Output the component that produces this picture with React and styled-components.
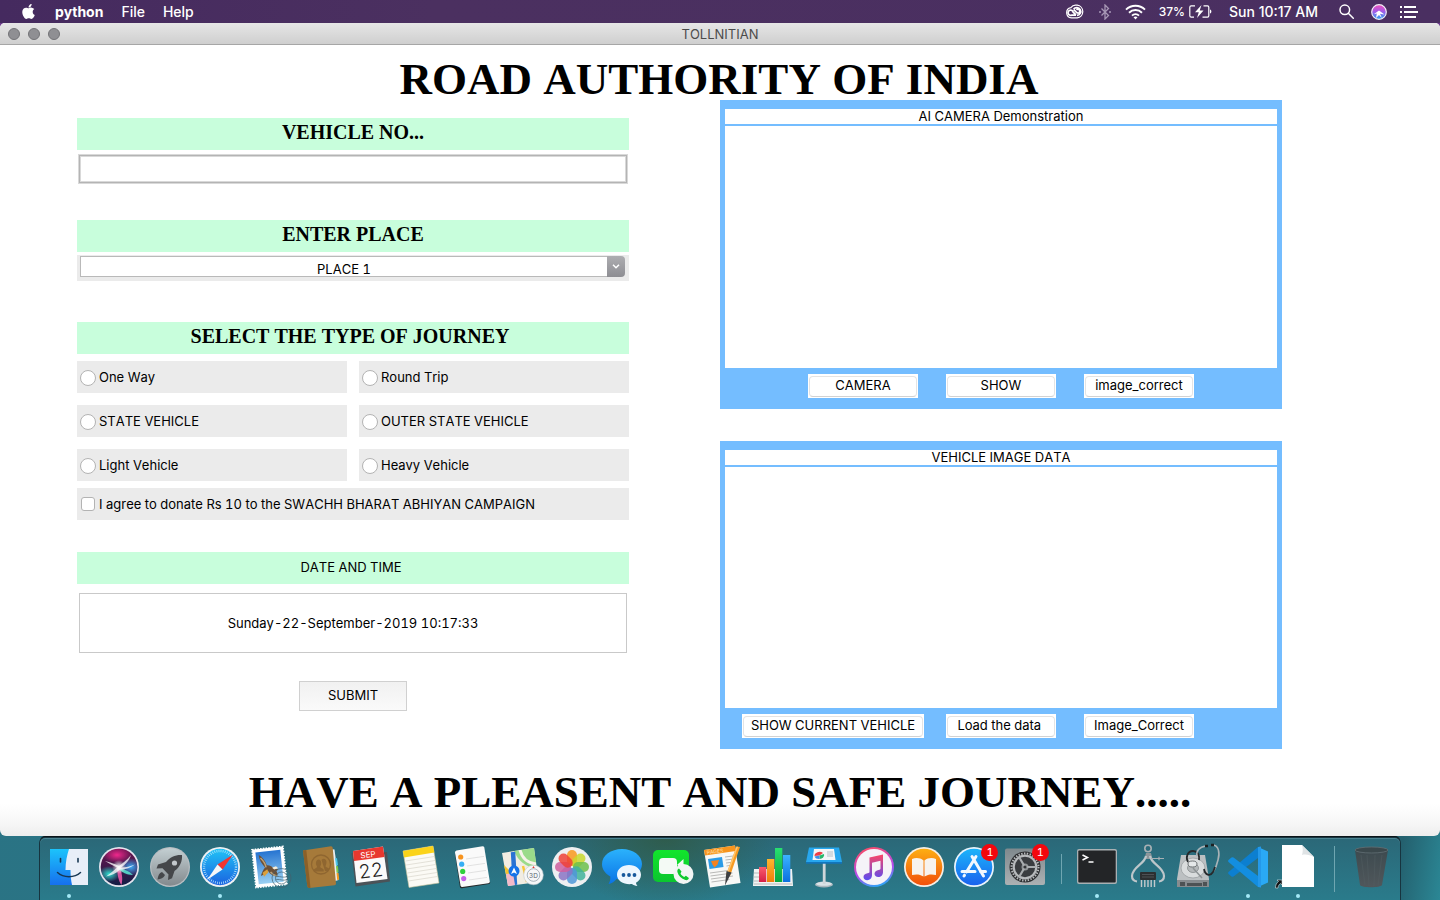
import React from "react";
import styled, { createGlobalStyle, css } from "styled-components";
import { FaApple } from "react-icons/fa";

const GlobalStyle = createGlobalStyle`
  *, *::before, *::after { box-sizing: border-box; }
  html, body { margin: 0; }
  body {
    background: #2a7786;
    color: #000;
    font-family: Inter, "Liberation Sans", sans-serif;
    font-size: 13px;
    font-kerning: none;
    font-variant-numeric: tabular-nums;
  }
  button, input, select { font: inherit; color: inherit; }
  h1, h2, p, ul { margin: 0; padding: 0; }
`;

const Desktop = styled.div`
  min-height: 100vh;
  display: flex;
  flex-direction: column;
  background: linear-gradient(100deg, #1b5268 0%, #2a7384 5%, #2a7786 60%, #24606e 97%, #2b8795 100%);
`;

/* ---------- menu bar ---------- */

const MenuBar = styled.header`
  height: 23px;
  display: flex;
  align-items: center;
  justify-content: space-between;
  padding: 0 22px 0 20px;
  background: linear-gradient(90deg, #452a5f, #4b3060 30%, #4a2f61);
  color: #fff;
  font-size: 14px;
  font-weight: 500;
  font-variant-numeric: normal;
`;

const MenuGroup = styled.nav`
  display: flex;
  align-items: center;
  gap: ${(p) => p.$gap}px;
`;

const MenuItem = styled.button`
  display: flex;
  align-items: center;
  margin-right: ${(p) => p.$after || 0}px;
  padding: 0;
  border: 0;
  background: none;
  line-height: 22px;
  font-weight: ${(p) => (p.$strong ? 700 : 500)};
`;

const Battery = styled.span`
  display: flex;
  align-items: center;
  gap: 4px;
  margin-right: 4px;
  font-size: 12px;
  line-height: 22px;
`;

const Clock = styled.time`
  margin-right: 8px;
  line-height: 22px;
`;

/* ---------- window ---------- */

const Window = styled.div`
  flex: 1;
  display: flex;
  flex-direction: column;
  border-radius: 5px 5px 6px 6px;
  overflow: hidden;
  background: linear-gradient(0deg, #ededed 0, #f6f6f6 12px, #fff 32px);
`;

const WindowBacking = styled.div`
  flex: 1;
  display: flex;
  flex-direction: column;
  background: linear-gradient(180deg, #6b3a8c 0, #6b3a8c 30px, transparent 30px);
`;

const TitleBar = styled.div`
  height: 22px;
  display: grid;
  grid-template-columns: 1fr auto 1fr;
  align-items: center;
  padding: 0 8px;
  background: linear-gradient(180deg, #e6e6e6, #cfcfcf);
  border-bottom: 1px solid #a6a6a6;
  color: #4b4b4b;
`;

const Lights = styled.div`
  display: flex;
  gap: 8px;
`;

const Light = styled.button`
  width: 12px;
  height: 12px;
  padding: 0;
  border: 1px solid #737377;
  border-radius: 50%;
  background: #8f8f93;
`;

const PageTitle = styled.h1`
  padding: 14px 2px 0 0;
  font: bold 45px/41px "Liberation Serif", serif;
  font-kerning: none;
  text-align: center;
`;

const Farewell = styled.p`
  padding: 18px 0 19px;
  font: bold 45px/50px "Liberation Serif", serif;
  font-kerning: none;
  text-align: center;
`;

const Columns = styled.main`
  flex: 1;
  display: grid;
  grid-template-columns: 552fr 562fr;
  column-gap: 91px;
  padding: 0 158px 0 77px;
`;

/* ---------- form ---------- */

const Form = styled.form`
  padding-top: 18px;
  display: flex;
  flex-direction: column;
`;

const Section = styled.section`
  display: flex;
  flex-direction: column;
  gap: ${(p) => p.$gap}px;
  margin-bottom: ${(p) => p.$after}px;
`;

const band = css`
  display: block;
  height: 32px;
  background: #c8fedc;
  text-align: center;
`;

const Band = styled.label`
  ${band}
  font: bold 20px/29px "Liberation Serif", serif;
  font-kerning: none;
`;

const BandHeading = styled.h2`
  ${band}
  padding-right: 6px;
  font: bold 20px/29px "Liberation Serif", serif;
  font-kerning: none;
`;

const DateBand = styled.label`
  ${band}
  padding-right: 4px;
  line-height: 31px;
`;

const TextField = styled.input`
  height: 28px;
  margin: 0 2px;
  padding: 0 6px;
  border: 1px solid #b4b4b4;
  background: #fff;
  box-shadow: 0 0 0 1px #d9d9d9, inset 0 0 0 1px #d9d9d9;
  outline: none;
`;

const Combo = styled.div`
  display: flex;
  align-items: flex-start;
  height: 26px;
  padding: 1px 4px 0 3px;
  background: #ebebeb;
`;

const ComboSelect = styled.select`
  appearance: none;
  flex: 1;
  min-width: 0;
  height: 21px;
  padding: 5px 0 0;
  border: 1px solid #b9b9b9;
  border-right: 0;
  border-radius: 0;
  background: #fff;
  line-height: 15px;
  text-align: center;
  text-align-last: center;
  outline: none;
`;

const ComboArrow = styled.span`
  display: flex;
  align-items: center;
  justify-content: center;
  width: 18px;
  height: 21px;
  border-radius: 0 4px 4px 0;
  background: linear-gradient(180deg, #adadb1, #8e8e93);
`;

const ChoiceGrid = styled.div`
  display: grid;
  grid-template-columns: 1fr 1fr;
  gap: 12px;
`;

const Choice = styled.label`
  display: flex;
  align-items: center;
  gap: 3px;
  height: 32px;
  padding: 0 3px;
  background: #ebebeb;
`;

const Radio = styled.input.attrs({ type: "radio" })`
  appearance: none;
  width: 16px;
  height: 16px;
  margin: 2px 0 0;
  border: 1px solid #b3b3b3;
  border-radius: 50%;
  background: #fff;
  &:checked { box-shadow: inset 0 0 0 4px #fff; background: #444; }
`;

const Checkbox = styled.input.attrs({ type: "checkbox" })`
  appearance: none;
  width: 14px;
  height: 14px;
  margin: 0 1px;
  border: 1px solid #b3b3b3;
  border-radius: 3px;
  background: #fff;
  &:checked { box-shadow: inset 0 0 0 3px #fff; background: #444; }
`;

const DateBox = styled.output`
  display: flex;
  align-items: center;
  justify-content: center;
  height: 60px;
  margin: 0 2px;
  border: 1px solid #c9c9c9;
  background: #fff;
`;

const Submit = styled.button`
  align-self: center;
  width: 108px;
  height: 30px;
  padding: 0 0 2px;
  border: 1px solid #d0d0d0;
  background: linear-gradient(180deg, #f1f1f1, #fafafa);
`;

/* ---------- camera panels ---------- */

const Panels = styled.div`
  display: flex;
  flex-direction: column;
  gap: 32px;
`;

const Panel = styled.section`
  display: flex;
  flex-direction: column;
  padding: 9px 5px 11px;
  background: #74bdff;
`;

const PanelTitle = styled.h2`
  margin-bottom: 2px;
  background: #fff;
  font-size: 13px;
  font-weight: 400;
  line-height: 15px;
  text-align: center;
`;

const Screen = styled.div`
  height: ${(p) => p.$height}px;
  margin-bottom: 6px;
  background: #fff;
`;

const Actions = styled.div`
  display: flex;
  justify-content: center;
  padding-right: ${(p) => p.$inset || 0}px;
`;

const Action = styled.button`
  width: ${(p) => (p.$wide ? 182 : 110)}px;
  height: 24px;
  margin-right: ${(p) => p.$after || 0}px;
  padding: 1px;
  border: 0;
  background: #fff;
  white-space: pre;
`;

const ActionFace = styled.span`
  display: block;
  height: 21px;
  border: 1px solid #e4e4e4;
  border-bottom-color: #d2d2d2;
  border-radius: 4px;
  line-height: 17px;
`;

/* ---------- dock ---------- */

const DockArea = styled.footer`
  padding: 0 40px;
`;

const Dock = styled.ul`
  display: flex;
  height: 62px;
  margin-top: 2px;
  padding: 0 4px;
  list-style: none;
  border-radius: 5px 5px 0 0;
  background:
    radial-gradient(ellipse 110px 70px at 46% 0, rgba(48, 88, 62, 0.75), transparent),
    linear-gradient(180deg, #2b6878, #2a7b8b);
  box-shadow: 0 0 0 1px #17343f, 0 -2px 0 #0a1418, inset 0 1px 0 #4a8391;
`;

const DockItem = styled.li`
  flex: 50 1 0;
  display: flex;
  flex-direction: column;
  align-items: center;
  padding-top: 5px;
`;

const DockButton = styled.button`
  position: relative;
  width: 48px;
  height: 48px;
  padding: 0;
  border: 0;
  background: none;
  svg { display: block; overflow: visible; }
`;

const RunningDot = styled.span`
  width: 4px;
  height: 4px;
  margin-top: 3px;
  border-radius: 50%;
  background: #a5e9f7;
`;

const Badge = styled.span`
  position: absolute;
  top: 1px;
  right: 0;
  width: 17px;
  height: 17px;
  border-radius: 50%;
  background: #f3070d;
  color: #fff;
  font-size: 11px;
  line-height: 17px;
  text-align: center;
`;

const DockSeparator = styled.li`
  flex: 22 1 0;
  display: flex;
  justify-content: center;
  align-items: flex-start;
  padding-top: ${(p) => (p.$tall ? 8 : 16)}px;
  &::before {
    content: "";
    width: 1px;
    height: ${(p) => (p.$tall ? 46 : 30)}px;
    background: #6fa6b1;
  }
`;

/* ---------- dock drawings ---------- */

const Finder = () => (
  <>
    <rect x="5" y="6" width="38" height="36" fill="url(#finderBlue)" />
    <path d="M24 6h19v36H27c-1-5-1.500-9-1.500-15H20.500C20.500 19 22 12 24 6z" fill="#e8eef8" />
    <path d="M12.500 29.500c6 5.500 17 5.500 23 0" fill="none" stroke="#173753" strokeWidth="1.500" strokeLinecap="round" />
    <path d="M15.500 15.500v3.500M33 15.500v3.500" stroke="#173753" strokeWidth="1.600" strokeLinecap="round" />
  </>
);

const Siri = () => (
  <>
    <circle cx="24" cy="24" r="20" fill="#e4e4ee" />
    <circle cx="24" cy="24" r="18.300" fill="url(#siriBg)" />
    <g clipPath="url(#siriClip)">
      <ellipse cx="22" cy="12" rx="14" ry="8" fill="url(#siriPink)" />
      <ellipse cx="14" cy="31" rx="11" ry="8" fill="url(#siriTeal)" />
      <ellipse cx="36" cy="24" rx="11" ry="9" fill="url(#siriSky)" />
      <path d="M24 24c3 5 4 11 2.500 18-3-4-4-10-4.500-17z" fill="#e85aa5" opacity=".9" />
      <path d="M24 25c5 1 10 3 14 7-6 0-11-3-15-6z" fill="#59e6cf" opacity=".85" />
      <path d="M10 18c5 1 10 3 14 5 4-3 8-6 12-11-2 6-6 10-10 12.500 5 0 9-1 14-3-4 3-9 5-15 5-4 4-9 6-14 7 4-3 8-6 11-9-4-2-8-4-12-6.500z" fill="#fff" opacity=".75" />
    </g>
    <circle cx="24" cy="24" r="7" fill="url(#glow)" />
  </>
);

const Rocket = () => (
  <>
    <circle cx="24" cy="24" r="20" fill="#b9bec2" />
    <circle cx="24" cy="24" r="18.800" fill="url(#steel)" />
    <path d="M36 12c-6-.5-12 2-16 7l-8 2.500-1.500 4 6-.3 6 6.300-.5 5.500 4-1.800 2.500-7.200C34 24 36.500 18 36 12z" fill="#45474a" />
    <circle cx="28.500" cy="20" r="2.600" fill="#c3c8cb" />
    <path d="M16 29c-3 1-4 4-4.500 7.500 3.500-.5 6-1.500 7.500-4.500z" fill="#45474a" />
  </>
);

const Safari = () => (
  <>
    <circle cx="24" cy="24" r="20" fill="#eef1f4" />
    <circle cx="24" cy="24" r="18.200" fill="url(#safariBlue)" />
    <circle cx="24" cy="24" r="16" fill="none" stroke="#bfe8fb" strokeWidth="2.400" strokeDasharray=".7 1.400" />
    <path d="M37 11.500 21.500 21.500l5 5z" fill="#f3342f" />
    <path d="M11 37l10.500-15.500 5 5z" fill="#f4f6f8" />
  </>
);

const Mail = () => (
  <>
    <g transform="rotate(-6 24 24)">
      <rect x="8" y="5" width="31" height="38" fill="#fff" stroke="#fff" strokeWidth="1.800" strokeDasharray="1.500 1.200" />
      <rect x="11" y="8" width="25" height="32" fill="url(#sky)" />
      <path d="M14 11c3 2 6 6 7 11 3 0 5 2 7 4l4 1-2 2c1 2 1 4 0 5-4-1-7-3-8-6-3 2-5 3-8 4 1-3 3-6 5-8-3-4-5-8-5-13z" fill="#6b5038" />
      <path d="M15.500 14c2.500 3 4.500 7 4.500 10M24 29c2 3 4 4 6 5" fill="none" stroke="#bba076" strokeWidth="1.500" />
      <path d="M26 25l4-1 2 2-4 1z" fill="#f5ecd8" />
      <path d="M16 29l5-3 1 3-5 4z" fill="#dba03b" />
    </g>
    <g fill="none" stroke="#44616e" strokeWidth="1" opacity=".7">
      <circle cx="35.500" cy="35" r="9.500" />
      <circle cx="35.500" cy="35" r="6" />
      <path d="M29 34c4-2 8 2 13-1M29 37c4-2 8 2 13-1" />
    </g>
  </>
);

const Contacts = () => (
  <>
    <path d="M33 6l4.500.5L41.500 37l-6 2z" fill="#eceff0" />
    <path d="M38 15l2 .2 1 7-2 .5z" fill="#4ec4e8" />
    <path d="M39 23l2 .2.500 6-2 .5z" fill="#7ec94b" />
    <path d="M39.500 30l2 0 .7 6.500-2 .5z" fill="#f49b20" />
    <path d="M6 7.500 34 3.200q1.500 0 1.700 1.500L39 40.500q0 1.500-1.500 1.700L12.500 45q-2-.2-2.200-2z" fill="#a67a3a" />
    <path d="M6 7.500l3.300-.5 4.200 37.800-1.200.2q-1.800 0-2-2z" fill="#8a6029" />
    <circle cx="24" cy="21.500" r="9.500" fill="none" stroke="#8f6630" strokeWidth="1.300" />
    <path d="M16.500 26.500c2-1.200 3.500-1.500 3.500-3-2-3-1-7 1.600-7s3.500 4 1.600 7c0 1.500 2 1.500 3.500 3v2h-9zM24.500 17c2-2.500 5-1 5 2 0 2-1 3.500-1 4.500 1.500 1 3 1.500 4 2.500l-1.500 2H28" fill="#8f6630" />
  </>
);

const Calendar = () => (
  <>
    <path d="M4.500 10l4 33.500L43 38.500 40 9" fill="#4b5358" />
    <path d="M6 8l30-4.500L40.500 36 9.500 40z" fill="#fbfbfb" />
    <path d="M6 8l30-4.500L37.500 14 7 18z" fill="#e8382f" />
    <g transform="rotate(-7 22 24)" fontFamily="Inter, sans-serif" textAnchor="middle">
      <text x="22.500" y="14.500" fontSize="8" fill="#fff">SEP</text>
      <text x="23.500" y="34.500" fontSize="19" fontWeight="300" fill="#222">22</text>
    </g>
  </>
);

const Notes = () => (
  <>
    <path d="M6 8l30-5 6 37-30 4.500z" fill="#fbfaf5" stroke="#c9c39b" strokeWidth=".6" />
    <path d="M6 8l30-5 1.300 6.500L7 14.500z" fill="#fbd31a" />
    {[18, 22, 26, 30, 34, 38].map((y, i) => (
      <path key={y} d={`M${8.5 + i * 0.6} ${y}l29-4.500`} stroke="#d8d6cb" strokeWidth=".7" />
    ))}
  </>
);

const Reminders = () => (
  <>
    <path d="M7 11l5 33.500q.5 1 2 .8L41 41q1.500-.5 1.200-2" fill="#26292b" />
    <path d="M8.500 7.500l26-4.300q1.500 0 1.800 1.300l5.500 34q0 1.500-1.500 1.800l-26 3.700q-1.500 0-1.800-1.500L7 9.500q0-1.700 1.500-2z" fill="#fafafa" />
    {["#f7931e", "#35aef5", "#2fd13c", "#c65fe8"].map((fill, i) => (
      <g key={fill}>
        <circle cx={12.700 + i} cy={14 + i * 7.2} r="2.600" fill={fill} />
        <path d={`M${18 + i} ${16 + i * 7}l18-2.600`} stroke="#d7d7d7" strokeWidth=".7" />
      </g>
    ))}
  </>
);

const Maps = () => (
  <>
    <path d="M4 10l32-5 4.500 34L10 43z" fill="#f2ede2" />
    <path d="M16 8l20-3 3 21c-11-2-19-8-23-18z" fill="#9bdb8a" />
    <path d="M22 7c2 8 8 13 16 14" fill="none" stroke="#f7f3e9" strokeWidth="3" />
    <path d="M6 22l8 8-5 6z" fill="#f4c32c" />
    <path d="M15 9l2 33" stroke="#2a73d2" strokeWidth="4.500" />
    <path d="M8 31l7-1 2 12-7 1z" fill="#f3b9c9" />
    <path d="M25 23l4 16" stroke="#f8c63a" strokeWidth="2.500" />
    <circle cx="16" cy="28" r="5.500" fill="#1673e8" />
    <path d="M16 24.500l3 6.500-3-1.500-3 1.500z" fill="#fff" />
    <circle cx="35.500" cy="32" r="9.800" fill="#f6f7f8" stroke="#c3c8cc" strokeWidth=".6" />
    <circle cx="35.500" cy="32" r="6.300" fill="none" stroke="#8b98a2" strokeWidth=".7" />
    <text x="35.500" y="34.500" fontSize="6.500" textAnchor="middle" fill="#5c6770" fontFamily="Inter, sans-serif">3D</text>
    <path d="M35.500 23l1.200 2h-2.400z" fill="#e3342f" />
  </>
);

const Photos = () => (
  <>
    <circle cx="24" cy="24" r="20" fill="#eeeff1" />
    {["#f8991d", "#c9d72b", "#6cbf4b", "#3fb39b", "#4f97d8", "#8a74c4", "#cf5f9f", "#ee4136"].map((fill, i) => (
      <rect key={fill} x="19" y="7" width="10" height="16" rx="5" fill={fill} opacity=".85" transform={`rotate(${i * 45} 24 24)`} />
    ))}
  </>
);

const Messages = () => (
  <>
    <path d="M24 6c11 0 20 6.500 20 15s-9 15.500-20 15.500c-2 0-4-.2-5.500-.6C16 39 13.500 40.500 10.500 41c1.500-2.500 2-4.500 1.800-7.500C7 30.500 4 26.300 4 21 4 12.500 13 6 24 6z" fill="url(#messageBlue)" />
    <path d="M31 22c6.800 0 12 4.200 12 9.700 0 3.500-2 6.300-5 8 0 1 .6 2 1.500 3.300-2.500-.2-4.300-1-5.500-2-7.500 1-15-2.800-15-9.300 0-5.500 5.200-9.700 12-9.700z" fill="#edf6fe" />
    <g fill="#17589c">
      <circle cx="25.500" cy="32" r="1.900" />
      <circle cx="31" cy="32" r="1.900" />
      <circle cx="36.500" cy="32" r="1.900" />
    </g>
  </>
);

const FaceTime = () => (
  <>
    <rect x="4" y="7" width="36" height="32" rx="5" fill="url(#green)" />
    <rect x="10" y="15" width="18" height="16" rx="4" fill="#f4faf5" />
    <path d="M28 22l6.500-6v10z" fill="#f4faf5" />
    <circle cx="34.500" cy="31" r="10" fill="#f3f5f4" />
    <path d="M30 25.500l2.500 3-1 2c1 1.700 2 2.700 3.700 3.500l1.700-1.200 3 2.200c-.5 1.800-1.800 2.500-3.500 2-4-1.200-7-4.200-8-8-.3-1.700.3-3 1.600-3.500z" fill="#10c92e" />
  </>
);

const Pages = () => (
  <>
    <path d="M5 7l31-4.500L41.500 40 11 44.500z" fill="#f8f8f6" />
    <path d="M5 7l31-4.500.8 5.500L6 12.500z" fill="#f7941d" />
    <text x="8" y="11.500" fontSize="5" fill="#ffe0b0" fontFamily="Inter, sans-serif" transform="rotate(-8 8 11.500)">PAGES</text>
    <path d="M9 16l14-2 1.500 10-14 2z" fill="#2c9be6" />
    <path d="M12 18l8-1-1.500 4.500-3 3-2-3z" fill="#f58220" />
    <path d="M26 14l8-1M26.500 17l8-1M27 20l8-1M27.500 23l6-1M11 30l22-3M11.500 33l22-3M12 36l22-3M12.500 39l18-2.500" stroke="#b9b9b7" strokeWidth="1" />
    <path d="M37.500 3.500 41 4 31 33l-4-1z" fill="#f79a22" />
    <path d="M37.500 3.500l1.500.2L28.500 32.500 27 32z" fill="#ffc66d" />
    <path d="M27.500 28l5 1.500-4.500 9-2 4 .5-5z" fill="#3d3f42" />
  </>
);

const Numbers = () => (
  <>
    <path d="M5 26h38l1 17H4z" fill="#f1f2f2" />
    <path d="M5 30h5M5 34h5M5 38h5M5 41h38" stroke="#a7adaf" strokeWidth=".8" />
    <rect x="10" y="24" width="7.300" height="15" fill="url(#barRed)" />
    <rect x="18" y="16" width="7.300" height="23" fill="url(#barOrange)" />
    <rect x="26" y="5" width="7.300" height="34" fill="url(#barGreen)" />
    <rect x="34" y="12" width="7.300" height="27" fill="url(#barBlue)" />
  </>
);

const Keynote = () => (
  <>
    <ellipse cx="24" cy="41.500" rx="9" ry="3" fill="#a9b6bd" />
    <ellipse cx="24" cy="40.800" rx="8" ry="2" fill="#dae3e8" />
    <rect x="22.800" y="19" width="2.800" height="22" fill="#cfd6da" />
    <path d="M9 4.500h30L42 19H6z" fill="#27a7ee" />
    <path d="M6 19h36v1.800H6z" fill="#1275bb" />
    <path d="M14 6h20l1.500 11h-23z" fill="#f2f6f8" />
    <path d="M14.500 13a5 4 0 0 1 8.500-3l-3.500 2.500z" fill="#ee3f46" />
    <path d="M24 11a5 4 0 0 1-4.500 5v-3.500z" fill="#28b76b" />
    <path d="M14.500 13.500a5 3.500 0 0 0 5 2.500v-3.500z" fill="#3c8fe8" />
    <path d="M27 9h6M27 11h6M27 13h6" stroke="#a6b2b9" strokeWidth=".8" />
  </>
);

const ITunes = () => (
  <>
    <circle cx="24" cy="24" r="20" fill="url(#rainbow)" />
    <circle cx="24" cy="24" r="18" fill="#f5f3f8" />
    <path d="M19.500 14.500 33 11.500V29c0 3-2 5-4.700 5-2.300 0-3.800-1.300-3.800-3.200 0-2 1.800-3.300 4-3.800 1.500-.3 2-.5 2-1.500v-7.700l-8.500 2V32c0 3-2 5.200-4.800 5.200-2.200 0-3.700-1.400-3.700-3.200 0-2 1.600-3.200 4-3.700 1.500-.3 2-.6 2-1.600z" fill="url(#note)" />
  </>
);

const Books = () => (
  <>
    <circle cx="24" cy="24" r="20" fill="#f6efe6" />
    <circle cx="24" cy="24" r="18.300" fill="url(#orange)" />
    <path d="M23.500 17.500c-3.500-3-8-3-11.500-1.500v16c4-1 8-.8 11.500 1.500zM24.500 17.500c3.500-3 8-3 11.500-1.500v16c-4-1-8-.8-11.500 1.500z" fill="#f7f3ed" />
  </>
);

const AppStore = () => (
  <>
    <circle cx="24" cy="24" r="20" fill="#eaf4fc" />
    <circle cx="24" cy="24" r="18.300" fill="url(#storeBlue)" />
    <g fill="none" stroke="#f2f8fe" strokeWidth="3" strokeLinecap="round">
      <path d="M22 13.500 33.500 33M26 13.500 16.500 29M12 28.500h13M30.500 28.500h5M14 33l.5-.8" />
    </g>
  </>
);

const Settings = () => (
  <>
    <rect x="4" y="5.500" width="40" height="36.500" rx="2" fill="url(#metal)" />
    <circle cx="24" cy="24" r="15.500" fill="#2c2e30" />
    <circle cx="24" cy="24" r="13.500" fill="none" stroke="#b9bcbe" strokeWidth="2" strokeDasharray="1.400 1.427" />
    <circle cx="24" cy="24" r="11.300" fill="#3a3d40" stroke="#b7babc" strokeWidth="2.200" />
    <circle cx="24" cy="24" r="3.500" fill="#909496" />
    <path d="M24 24h11M24 24l-6-10M24 24l-6 10" stroke="#a9adaf" strokeWidth="2.200" />
    <circle cx="24" cy="24" r="1.600" fill="#323537" />
  </>
);

const Terminal = () => (
  <>
    <rect x="4" y="6" width="40" height="35" rx="2" fill="#a9b0b3" />
    <rect x="5.300" y="7.500" width="37.400" height="32" rx="1" fill="#232527" />
    <path d="M9.500 12l5 2.500-5 2.500M15.500 19h5" fill="none" stroke="#fff" strokeWidth="1.500" />
  </>
);

const Caliper = () => (
  <>
    <circle cx="24" cy="5.500" r="3.200" fill="none" stroke="#a8b0b4" strokeWidth="1.600" />
    <path d="M22 10l5 0 1.500 6h-8z" fill="#8e979b" />
    <path d="M22 13c-1 8-14 11-14 20 0 3 2 5 5 5.500M26 13c1 8 14 11 14 20 0 3-2 5-5 5.500" fill="none" stroke="#bdc6ca" strokeWidth="2.200" />
    <path d="M27 15.500h13M35 13.800v3.400" stroke="#a8b0b4" strokeWidth="1.200" />
    <rect x="16" y="29" width="16" height="8" rx="1" fill="#2c2f31" />
    <path d="M18 31.500h12M18 34h12" stroke="#575b5e" strokeWidth=".8" />
    <path d="M17.500 37v7M20.800 37v7M24 37v7M27.200 37v7M30.500 37v7" stroke="#c3c9cc" strokeWidth="1.400" />
  </>
);

const DiskUtility = () => (
  <>
    <path d="M7 12h24l4 24v8H3v-8z" fill="#bcc0c2" />
    <path d="M3 37h32v7H3z" fill="#878c8f" />
    <path d="M6 39h5v4H6zM13 40h15v3H13zM29 39h4v4h-4z" fill="#4d5254" />
    <ellipse cx="19" cy="25" rx="12" ry="10" fill="#d9dcdd" stroke="#9ba0a2" strokeWidth=".8" />
    <ellipse cx="19" cy="25" rx="5.500" ry="4.500" fill="#b4b8ba" stroke="#868b8d" strokeWidth=".8" />
    <path d="M19 25l9 10" stroke="#8d9294" strokeWidth="1.500" />
    <path d="M14 19c-3-5 0-11 5-11 4 0 7 4 6 9" fill="none" stroke="#26292b" strokeWidth="1.800" />
    <ellipse cx="18.500" cy="21" rx="4.500" ry="3" fill="#e5e8e9" stroke="#53585a" strokeWidth=".8" />
    <path d="M32 3c-7 1-10 5-9 10M38 2c7 0 8 8 6 15-1 5-3 9-5 12" fill="none" stroke="#a9b3b7" strokeWidth="1.600" />
    <path d="M30 26c1 6 6 8 9 3l2-5" fill="none" stroke="#26292b" strokeWidth="1.800" />
    <path d="M31 3h3M37 2h3" stroke="#1d2021" strokeWidth="2.600" />
  </>
);

const VsCode = () => (
  <>
    <path d="M34 4l10 4.500v31L34 44z" fill="#2aa9f5" />
    <path d="M34 4v11L9.500 33.500q-1 .6-2 0L4.500 31q-1-1 0-2z" fill="#0c7fd0" />
    <path d="M34 44V33L9.500 14.500q-1-.6-2 0L4.500 17q-1 1 0 2z" fill="#138ee0" />
    <path d="M34 4l3-.5v41L34 44z" fill="#2499ea" />
  </>
);

const Document = () => (
  <>
    <path d="M8 2h20l12 12v30H8z" fill="#fff" />
    <path d="M28 2c1 3 1 7 0 10 4-1 8 0 12 2z" fill="#dfe3e5" />
    <path d="M1.500 45c0-3 1-5 3-6.500L3 37h5v5l-1.500-1.500C5 41.500 4 43 4 45z" fill="#111" stroke="#d7e2e5" strokeWidth=".6" />
  </>
);

const Trash = () => (
  <>
    <path d="M8 7l5 35c1 3 21 3 22 0l6-35z" fill="url(#bin)" />
    <ellipse cx="24.500" cy="7" rx="16.500" ry="3" fill="#3b484c" stroke="#5d6b70" strokeWidth=".9" />
    <path d="M14 12l4 30M20 12l2 31M28 12l-1 31M35 12l-4 30" stroke="#525e63" strokeWidth=".5" />
  </>
);

const Stops = ({ id, from, to, across }) => (
  <linearGradient id={id} x1="0" y1="0" x2={across ? 1 : 0} y2="1">
    <stop offset="0" stopColor={from} />
    <stop offset="1" stopColor={to} />
  </linearGradient>
);

const Glow = ({ id, color }) => (
  <radialGradient id={id}>
    <stop offset="0" stopColor={color} />
    <stop offset="1" stopColor={color} stopOpacity="0" />
  </radialGradient>
);

const HiddenDefs = styled.svg`
  position: absolute;
  width: 0;
  height: 0;
`;

const Gradients = () => (
  <HiddenDefs aria-hidden="true">
    <defs>
      <clipPath id="siriClip"><circle cx="24" cy="24" r="18.300" /></clipPath>
      <Stops id="finderBlue" from="#1cc3fb" to="#1670ee" />
      <Stops id="siriBg" from="#6e1450" to="#131d45" />
      <Stops id="steel" from="#c3cfd2" to="#83898d" />
      <Stops id="safariBlue" from="#21c3f6" to="#1a62e0" />
      <Stops id="sky" from="#2674d1" to="#9bd1f3" />
      <Stops id="messageBlue" from="#2bb2fc" to="#0a73e6" />
      <Stops id="green" from="#12e52c" to="#0bc62f" />
      <Stops id="barRed" from="#fa5b6c" to="#d51f46" />
      <Stops id="barOrange" from="#ffb52e" to="#f07d0a" />
      <Stops id="barGreen" from="#28e070" to="#08a63d" />
      <Stops id="barBlue" from="#3bb3ff" to="#0b70df" />
      <linearGradient id="rainbow" x1=".3" y1="0" x2=".6" y2="1">
        <stop offset="0" stopColor="#fb4b65" />
        <stop offset=".6" stopColor="#b44cf0" />
        <stop offset="1" stopColor="#29a6f5" />
      </linearGradient>
      <Stops id="note" from="#fb4766" to="#5a4bf2" />
      <Stops id="orange" from="#fdae13" to="#f1500b" />
      <Stops id="storeBlue" from="#1cb4fa" to="#1a62ee" />
      <Stops id="metal" from="#7f898d" to="#adb1b3" />
      <Stops id="bin" from="#3d4a4f" to="#50575b" />
      <Glow id="glow" color="#fff" />
      <Glow id="siriPink" color="#f0288c" />
      <Glow id="siriTeal" color="#2fe0d0" />
      <Glow id="siriSky" color="#3aa8f5" />
    </defs>
  </HiddenDefs>
);

const apps = [
  { name: "Finder", Art: Finder, running: true },
  { name: "Siri", Art: Siri },
  { name: "Launchpad", Art: Rocket },
  { name: "Safari", Art: Safari, running: true },
  { name: "Mail", Art: Mail },
  { name: "Contacts", Art: Contacts },
  { name: "Calendar", Art: Calendar },
  { name: "Notes", Art: Notes },
  { name: "Reminders", Art: Reminders },
  { name: "Maps", Art: Maps },
  { name: "Photos", Art: Photos },
  { name: "Messages", Art: Messages },
  { name: "FaceTime", Art: FaceTime },
  { name: "Pages", Art: Pages },
  { name: "Numbers", Art: Numbers },
  { name: "Keynote", Art: Keynote },
  { name: "iTunes", Art: ITunes },
  { name: "Books", Art: Books },
  { name: "App Store", Art: AppStore, badge: 1 },
  { name: "System Preferences", Art: Settings, badge: 1 },
];

const openApps = [
  { name: "Terminal", Art: Terminal, running: true },
  { name: "System Information", Art: Caliper },
  { name: "Disk Utility", Art: DiskUtility },
  { name: "Visual Studio Code", Art: VsCode, running: true },
  { name: "Document", Art: Document, running: true },
];

const DockApp = ({ name, Art, running, badge }) => (
  <DockItem>
    <DockButton type="button" aria-label={name}>
      <svg width="48" height="48" viewBox="0 0 48 48" aria-hidden="true"><Art /></svg>
      {badge && <Badge>{badge}</Badge>}
    </DockButton>
    {running && <RunningDot />}
  </DockItem>
);

/* ---------- menu bar icons ---------- */

const CreativeCloudIcon = () => (
  <svg width="20" height="15" viewBox="0 0 20 15" fill="none" stroke="#fff" aria-hidden="true">
    <path d="M6.500 13.900a5.200 5.200 0 0 1-.6-10.300A6 6 0 0 1 10.500 1.200h1.700a6.400 6.400 0 0 1 0 12.700z" strokeWidth="1.200" />
    <path d="M11 10.800 8.200 8.200A2.600 2.600 0 1 0 6.500 11.200h4.500M8.600 5.300a3.900 3.900 0 1 1 3.400 6.100M8.800 5.600l3.200 3.200a1.900 1.900 0 1 0-.5-3" strokeWidth="1.700" />
  </svg>
);

const BluetoothIcon = () => (
  <svg width="14" height="16" viewBox="-1 0 14 16" fill="none" stroke="#a797b5" aria-hidden="true">
    <path d="M2.500 4.500l7 7L6 15V1l3.500 3.500-7 7" strokeWidth="1.300" />
    <path d="M0 8h2M10 8h2M5 8h2" strokeWidth="1.600" />
  </svg>
);

const WifiIcon = () => (
  <svg width="21" height="16" viewBox="0 0 21 16" fill="none" stroke="#fff" strokeWidth="1.900" aria-hidden="true">
    <path d="M1 5.600a13.500 13.500 0 0 1 19 0M4 8.700a9.300 9.300 0 0 1 13 0M7 11.600a5 5 0 0 1 7 0" />
    <path d="M10.500 15.500l-2-2.200a3 3 0 0 1 4 0z" fill="#fff" stroke="none" />
  </svg>
);

const BatteryIcon = () => (
  <svg width="23" height="13" viewBox="0 0 23 13" aria-hidden="true">
    <path d="M6 .8H2.200Q.8.800.8 2.200v8.600q0 1.400 1.400 1.400H5M14.500.8h4q1.300 0 1.300 1.400v8.600q0 1.400-1.300 1.400H13.500" fill="none" stroke="#fff" strokeWidth="1.200" />
    <path d="M12.500 0 6 7.300h3.800L8 13l6.500-7.500h-3.800z" fill="#fff" />
    <path d="M21 4.500c1.800.5 1.800 3.500 0 4z" fill="#fff" />
  </svg>
);

const SearchIcon = () => (
  <svg width="15" height="15" viewBox="0 0 15 15" fill="none" stroke="#fff" strokeWidth="1.500" aria-hidden="true">
    <circle cx="5.800" cy="5.800" r="4.800" />
    <path d="M9.300 9.300l5 5" strokeLinecap="round" />
  </svg>
);

const SiriMenuIcon = () => (
  <svg width="16" height="16" viewBox="0 0 16 16" aria-hidden="true">
    <circle cx="8" cy="8" r="7.300" fill="url(#siriMenu)" stroke="#f3eef8" strokeWidth="1.200" />
    <path d="M8 6.500l5.500 4L9 9.800l2 4.500L8 11l-3 3 .8-4.500-3 .8z" fill="#fff" />
    <defs>
      <linearGradient id="siriMenu" x1="0" y1="0" x2="0" y2="1">
        <stop offset="0" stopColor="#f14fb9" />
        <stop offset=".45" stopColor="#a65ae8" />
        <stop offset="1" stopColor="#2aa3f2" />
      </linearGradient>
    </defs>
  </svg>
);

const ListIcon = () => (
  <svg width="18" height="12" viewBox="0 0 18 12" stroke="#fff" strokeWidth="2" aria-hidden="true">
    <path d="M0 1h2M0 6h2M0 11h2M4 1h12M4 6h14M4 11h12" />
  </svg>
);

const choices = [
  ["trip", "One Way"],
  ["trip", "Round Trip"],
  ["origin", "STATE VEHICLE"],
  ["origin", "OUTER STATE VEHICLE"],
  ["weight", "Light Vehicle"],
  ["weight", "Heavy Vehicle"],
];

export default function App() {
  return (
    <Desktop>
      <GlobalStyle />
      <Gradients />
      <MenuBar>
        <MenuGroup $gap={18} aria-label="Application menu">
          <MenuItem type="button" aria-label="Apple"><FaApple size={17} /></MenuItem>
          <MenuItem type="button" $strong>python</MenuItem>
          <MenuItem type="button">File</MenuItem>
          <MenuItem type="button">Help</MenuItem>
        </MenuGroup>
        <MenuGroup $gap={13} aria-label="Status">
          <MenuItem type="button" aria-label="Creative Cloud"><CreativeCloudIcon /></MenuItem>
          <MenuItem type="button" aria-label="Bluetooth"><BluetoothIcon /></MenuItem>
          <MenuItem type="button" aria-label="Wi-Fi"><WifiIcon /></MenuItem>
          <Battery>37% <BatteryIcon /></Battery>
          <Clock>Sun 10:17 AM</Clock>
          <MenuItem type="button" aria-label="Search" $after={4}><SearchIcon /></MenuItem>
          <MenuItem type="button" aria-label="Siri"><SiriMenuIcon /></MenuItem>
          <MenuItem type="button" aria-label="Notifications"><ListIcon /></MenuItem>
        </MenuGroup>
      </MenuBar>

      <WindowBacking>
        <Window>
          <TitleBar>
            <Lights>
              <Light type="button" aria-label="Close" />
              <Light type="button" aria-label="Minimize" />
              <Light type="button" aria-label="Zoom" />
            </Lights>
            <span>TOLLNITIAN</span>
          </TitleBar>

          <PageTitle>ROAD AUTHORITY OF INDIA</PageTitle>

          <Columns>
            <Form onSubmit={(e) => e.preventDefault()}>
              <Section $gap={5} $after={37}>
                <Band htmlFor="vehicle">VEHICLE NO...</Band>
                <TextField id="vehicle" type="text" />
              </Section>

              <Section $gap={3} $after={41}>
                <Band htmlFor="place">ENTER PLACE</Band>
                <Combo>
                  <ComboSelect id="place" defaultValue="PLACE 1">
                    <option>PLACE 1</option>
                  </ComboSelect>
                  <ComboArrow>
                    <svg width="8" height="5" viewBox="0 0 8 5" fill="none" stroke="#fff" strokeWidth="1.500" aria-hidden="true">
                      <path d="M1 .8l3 3 3-3" />
                    </svg>
                  </ComboArrow>
                </Combo>
              </Section>

              <Section $gap={7} $after={32}>
                <BandHeading>SELECT THE TYPE OF JOURNEY</BandHeading>
                <ChoiceGrid>
                  {choices.map(([name, label]) => (
                    <Choice key={label}>
                      <Radio name={name} value={label} />
                      {label}
                    </Choice>
                  ))}
                </ChoiceGrid>
                <Choice>
                  <Checkbox name="donate" />
                  I agree to donate Rs 10 to the SWACHH BHARAT ABHIYAN CAMPAIGN
                </Choice>
              </Section>

              <Section $gap={9} $after={28}>
                <DateBand htmlFor="now">DATE AND TIME</DateBand>
                <DateBox id="now">Sunday-22-September-2019 10:17:33</DateBox>
              </Section>

              <Submit type="submit">SUBMIT</Submit>
            </Form>

            <Panels>
              <Panel>
                <PanelTitle>AI CAMERA Demonstration</PanelTitle>
                <Screen $height={242} />
                <Actions>
                  <Action type="button" $after={28}><ActionFace>CAMERA</ActionFace></Action>
                  <Action type="button" $after={28}><ActionFace>SHOW</ActionFace></Action>
                  <Action type="button"><ActionFace>image_correct</ActionFace></Action>
                </Actions>
              </Panel>
              <Panel>
                <PanelTitle>VEHICLE IMAGE DATA</PanelTitle>
                <Screen $height={241} />
                <Actions $inset={66}>
                  <Action type="button" $wide $after={22}><ActionFace>SHOW CURRENT VEHICLE</ActionFace></Action>
                  <Action type="button" $after={28}><ActionFace>{"Load the data "}</ActionFace></Action>
                  <Action type="button"><ActionFace>Image_Correct</ActionFace></Action>
                </Actions>
              </Panel>
            </Panels>
          </Columns>

          <Farewell>HAVE A PLEASENT AND SAFE JOURNEY.....</Farewell>
        </Window>
      </WindowBacking>

      <DockArea>
        <Dock>
          {apps.map((app) => <DockApp key={app.name} {...app} />)}
          <DockSeparator aria-hidden="true" />
          {openApps.map((app) => <DockApp key={app.name} {...app} />)}
          <DockSeparator $tall aria-hidden="true" />
          <DockApp name="Trash" Art={Trash} />
        </Dock>
      </DockArea>
    </Desktop>
  );
}
